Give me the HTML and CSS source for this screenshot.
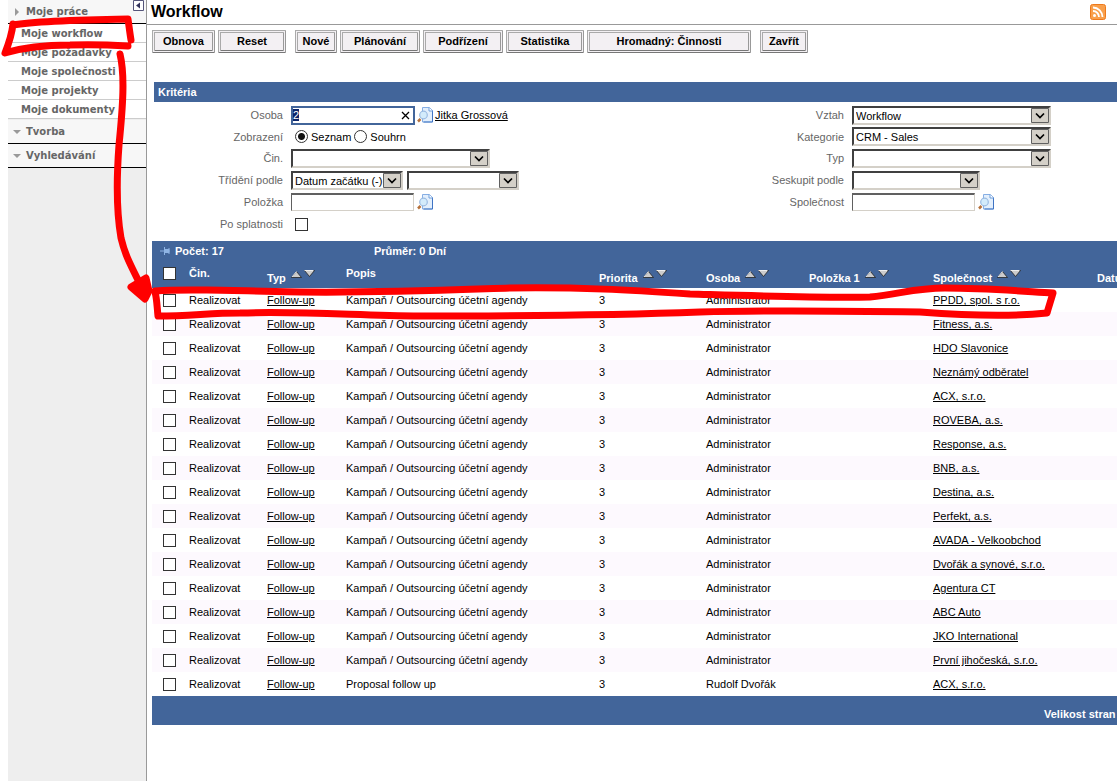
FILE: index.html
```html
<!DOCTYPE html>
<html lang="cs">
<head>
<meta charset="utf-8">
<title>Workflow</title>
<link rel="stylesheet" href="styles.css">
</head>
<body>
<svg class="defs" aria-hidden="true">
  <symbol id="lookup" viewBox="0 0 16 16">
    <path d="M5.500 .5h7l3 3v11.500h-10z" fill="#e3effc" stroke="#86aee4"/>
    <path d="M15.500 3.500v11.500h-9" fill="none" stroke="#3f74c4"/>
    <path d="M12 .5v3.500h3.500" fill="#fff" stroke="#6f9fdc"/>
    <path d="M3.500 12l-2.500 2.500" stroke="#b5703a" stroke-width="2.500"/>
    <circle cx="6.500" cy="8" r="3.800" fill="#d3ebfb" stroke="#9bbbe2" stroke-width="1.200"/>
  </symbol>
  <symbol id="arrow" viewBox="0 0 18 15">
    <path d="M.5 .5h17v14H.5z" fill="#d4d0c8" stroke="#606060"/>
    <path d="M5 5.500l4 4 4-4" fill="none" stroke="#000" stroke-width="1.700"/>
  </symbol>
  <symbol id="sort" viewBox="0 0 24 8">
    <path d="M.5 7.500h10L5.500 1.500z" fill="#ccc" stroke="#222" stroke-width=".8"/>
    <path d="M13.500 .5h10l-5 6z" fill="#ccc" stroke="#222" stroke-width=".8"/>
    <path d="M1 7L5.500 1.500M13.500 .5h9" stroke="#eee" fill="none"/>
  </symbol>
</svg>
<div class="app">
  <nav class="side">
    <button class="collapse" aria-label="Skrýt menu"><svg viewBox="0 0 11 11"><path d="M.5 .5h10v10H.5z" fill="#fff" stroke="#55557a"/><path d="M7 2.500v6L3 5.500z" fill="#33335c"/></svg></button>
    <button class="group"><svg viewBox="0 0 8 8"><path d="M2 0l4 4-4 4z"/></svg>Moje práce</button>
    <ul class="items">
      <li><a href="#">Moje workflow</a></li>
      <li><a href="#">Moje požadavky</a></li>
      <li><a href="#">Moje společnosti</a></li>
      <li><a href="#">Moje projekty</a></li>
      <li><a href="#">Moje dokumenty</a></li>
    </ul>
    <button class="group"><svg viewBox="0 0 8 8"><path d="M0 2h8L4 6z"/></svg>Tvorba</button>
    <button class="group"><svg viewBox="0 0 8 8"><path d="M0 2h8L4 6z"/></svg>Vyhledávání</button>
  </nav>
  <main class="main">
    <header class="head">
      <h1>Workflow</h1>
      <a href="#" aria-label="RSS"><svg class="rss" viewBox="0 0 16 16"><rect x=".5" y=".5" width="15" height="15" rx="2" fill="#f9a04c" stroke="#ee7a1c"/><circle cx="4.500" cy="11.500" r="1.500" fill="#fff"/><path d="M3 7a6 6 0 0 1 6 6M3 3.500A9.500 9.500 0 0 1 12.500 13" fill="none" stroke="#fff" stroke-width="1.800"/></svg></a>
    </header>
    <div class="toolbar">
      <button class="w-s">Obnova</button><button class="w-m">Reset</button>
      <button class="w-xs gap">Nové</button><button class="w-l">Plánování</button><button class="w-l">Podřízení</button><button class="w-stat">Statistika</button><button class="w-xl">Hromadný: Činnosti</button>
      <button class="w-xs gap">Zavřít</button>
    </div>
    <section class="criteria">
      <h2>Kritéria</h2>
      <form class="form">
        <div class="col">
          <label for="osoba">Osoba</label>
          <div class="field"><span class="clearable"><input class="text active" id="osoba" value="2"><button type="button" aria-label="Vymazat"><svg viewBox="0 0 9 9"><path d="M1 1l7 7M8 1L1 8" stroke="#000" stroke-width="1.300"/></svg></button></span><svg class="look"><use href="#lookup"/></svg><a href="#">Jitka Grossová</a></div>
          <span class="lab">Zobrazení</span>
          <div class="field radios"><input type="radio" name="view" id="seznam" checked><label for="seznam">Seznam</label><input type="radio" name="view" id="souhrn"><label for="souhrn">Souhrn</label></div>
          <label for="cin">Čin.</label>
          <div class="field"><span class="sel s-l"><select id="cin"><option></option></select><svg><use href="#arrow"/></svg></span></div>
          <label for="trideni">Třídění podle</label>
          <div class="field pair"><span class="sel s-s"><select id="trideni"><option>Datum začátku (-)</option></select><svg><use href="#arrow"/></svg></span><span class="sel s-s"><select aria-label="Třídění podle 2"><option></option></select><svg><use href="#arrow"/></svg></span></div>
          <label for="polozka">Položka</label>
          <div class="field"><input class="text" id="polozka"><svg class="look"><use href="#lookup"/></svg></div>
          <label for="splat">Po splatnosti</label>
          <div class="field radios"><input type="checkbox" id="splat"></div>
        </div>
        <div class="col">
          <label for="vztah">Vztah</label>
          <div class="field"><span class="sel s-l"><select id="vztah"><option>Workflow</option></select><svg><use href="#arrow"/></svg></span></div>
          <label for="kat">Kategorie</label>
          <div class="field"><span class="sel s-l"><select id="kat"><option>CRM - Sales</option></select><svg><use href="#arrow"/></svg></span></div>
          <label for="typ">Typ</label>
          <div class="field"><span class="sel s-l"><select id="typ"><option></option></select><svg><use href="#arrow"/></svg></span></div>
          <label for="sesk">Seskupit podle</label>
          <div class="field"><span class="sel s-m"><select id="sesk"><option></option></select><svg><use href="#arrow"/></svg></span></div>
          <label for="spol">Společnost</label>
          <div class="field"><input class="text" id="spol"><svg class="look"><use href="#lookup"/></svg></div>
        </div>
      </form>
    </section>
    <div class="grid">
      <div class="summary">
        <svg viewBox="0 0 10 10"><path d="M0 5h4M4.500 1v8M9 2v6M5 3.500h4v3H5z" stroke="#8fb4e4" fill="#8fb4e4"/></svg>
        <span>Počet: 17</span><span>Průměr: 0 Dní</span>
      </div>
      <table>
        <colgroup><col class="c1"><col class="c2"><col class="c3"><col class="c4"><col class="c5"><col class="c6"><col class="c7"><col class="c8"><col></colgroup>
        <thead><tr>
          <th><input type="checkbox" aria-label="Vybrat vše"></th><th>Čin.</th>
          <th class="s">Typ <svg><use href="#sort"/></svg></th><th>Popis</th>
          <th class="s">Priorita <svg><use href="#sort"/></svg></th><th class="s">Osoba <svg><use href="#sort"/></svg></th>
          <th class="s">Položka 1 <svg><use href="#sort"/></svg></th><th class="s">Společnost <svg><use href="#sort"/></svg></th><th class="s">Datum</th>
        </tr></thead>
        <tbody id="rows"></tbody>
      </table>
      <div class="foot">Velikost stran</div>
    </div>
  </main>
</div>
<svg class="marks" viewBox="0 0 1117 781" aria-hidden="true">
  <path d="M13 24C12 33 9 43 5 53C25 47 50 45 70 45C95 44 112 45 128 46M13 25C30 22 70 20 128 19C129 26 130 34 131 40"/>
  <path d="M120 54C125 75 123 105 119 145C116 185 117 215 121 238C125 255 131 266 139 282"/>
  <path class="tip" d="M131 287L146 278L149 291L145 299Z"/>
  <path d="M155 291C180 289 220 290 300 292C380 293 450 290 510 288C580 287 630 290 690 294C760 296 820 298 870 297C900 294 915 288 945 288C985 288 1020 291 1053 293C1051 300 1049 306 1047 313C1010 317 960 315 920 312C850 311 770 310 700 312C620 315 520 316 420 316C350 315 300 311 240 313C210 313 190 316 158 316C157 307 157 299 155 292"/>
</svg>
<script src="script.js"></script>
</body>
</html>
```
FILE: styles.css
```css
* { box-sizing: border-box; }
body {
  margin: 0;
  font: 11px/16px "Liberation Sans", Arial, sans-serif;
  color: #000;
  background: #fff;
  overflow: hidden;
}
a { color: inherit; }
button, input, select { font: inherit; color: inherit; margin: 0; }
.defs { position: absolute; width: 0; height: 0; }
.app { display: flex; min-height: 100vh; padding-left: 8px; }

.side {
  position: relative;
  flex: 0 0 139px;
  background: #eee;
  border-right: 1px solid #999;
  font: bold 10px/20px "DejaVu Sans", Verdana, sans-serif;
  color: #666;
}
.collapse {
  position: absolute;
  top: 0;
  right: 2px;
  width: 11px;
  height: 11px;
  padding: 0;
  border: 0;
  background: none;
}
.collapse svg { display: block; }
.group {
  display: flex;
  align-items: center;
  gap: 5px;
  width: 100%;
  height: 24px;
  padding: 1px 5px 0;
  border: 0;
  border-bottom: 1px solid #000;
  background: #f7f7f7;
}
.group svg { width: 8px; height: 8px; fill: #999; }
.items { list-style: none; margin: 0; padding: 0 0 1px; }
.items li { height: 19px; padding-left: 13px; background: #fff; border-bottom: 1px solid #ccc; }
.items a { text-decoration: none; }

.main { flex: 1; min-width: 0; overflow: hidden; }
.head {
  display: flex;
  align-items: center;
  justify-content: space-between;
  height: 25px;
  padding: 0 11px 0 4px;
  border-bottom: 1px solid #999;
}
.head h1 { margin: 0; font-size: 16px; }
.rss { display: block; width: 16px; height: 16px; }

.toolbar { display: flex; gap: 3px; padding: 5px; white-space: nowrap; }
.toolbar button {
  height: 23px;
  padding: 0 0 2px;
  border: 3px double;
  border-color: #aaa #999 #777 #aaa;
  background: #f3f0f3;
  font-weight: bold;
}
.toolbar .gap { margin-left: 6px; }
.w-xs { width: 48px; }
.w-xs:nth-child(3) { width: 42px; }
.w-s { width: 63px; }
.w-m { width: 68px; }
.w-l { width: 80px; }
.w-stat { width: 78px; }
.w-xl { width: 164px; }

.criteria { padding: 24px 0 0 7px; }
.criteria h2 {
  margin: 0;
  height: 20px;
  padding-left: 4px;
  font-size: 11px;
  line-height: 20px;
  color: #fff;
  background: #42659a;
}
.form { display: grid; grid-template-columns: 561px 1fr; padding-top: 2px; }
.col {
  display: grid;
  grid-template-columns: 129px 1fr;
  grid-template-rows: 22px 21px;
  grid-auto-rows: 22px;
  align-items: center;
  align-content: start;
  column-gap: 8px;
}
.col > label, .lab { text-align: right; color: #666; }
.field { display: flex; align-items: center; gap: 2px; }
.pair { gap: 4px; }
.text {
  width: 123px;
  height: 18px;
  padding: 0 1px;
  border: 1px solid #d4d0c8;
  border-top: 2px solid #606060;
  border-left-color: #606060;
  border-radius: 0;
  background: #fff;
  outline: 0;
}
.text.active { width: 124px; height: 19px; padding: 0; border: 2px solid #42659a; }
.text::selection { background: #0a246a; color: #fff; }
.look { width: 16px; height: 16px; }
.text + .look { margin-left: 1px; }
.clearable { position: relative; display: flex; }
.clearable button {
  position: absolute;
  top: 5px;
  right: 5px;
  width: 9px;
  height: 9px;
  padding: 0;
  border: 0;
  background: none;
}
.clearable svg { display: block; }
.sel { position: relative; display: flex; }
.sel select {
  appearance: none;
  width: 100%;
  height: 19px;
  padding: 0 18px 0 2px;
  border: 2px solid #d4d0c8;
  border-top-color: #404040;
  border-left-color: #404040;
  border-radius: 0;
  background: #fff;
}
.sel svg {
  position: absolute;
  top: 2px;
  right: 2px;
  width: 18px;
  height: 15px;
  pointer-events: none;
}
.s-l { width: 199px; }
.s-m { width: 128px; }
.s-s { width: 112px; }
.radios { padding-left: 4px; gap: 3px; }
input[type="radio"], input[type="checkbox"] {
  appearance: none;
  display: block;
  width: 13px;
  height: 13px;
  border: 1px solid #333;
  background: #fff;
}
input[type="radio"] { border-radius: 50%; }
input[type="radio"]:checked { background: radial-gradient(circle, #111 3px, #fff 4px); }

.grid { margin: 6px 0 0 5px; }
.summary {
  display: grid;
  grid-template-columns: 15px 199px 1fr;
  align-items: center;
  height: 21px;
  padding: 0 0 2px 8px;
  font-weight: bold;
  color: #fff;
  background: #42659a;
}
.summary svg { width: 10px; height: 10px; }
table { width: calc(100% + 60px); table-layout: fixed; border-collapse: collapse; white-space: nowrap; }
.c1 { width: 37px; }
.c2 { width: 78px; }
.c3 { width: 79px; }
.c4 { width: 253px; }
.c5 { width: 107px; }
.c6 { width: 103px; }
.c7 { width: 124px; }
.c8 { width: 164px; }
th, td { height: 24px; padding: 0; text-align: left; }
th { height: 26px; color: #fff; background: #42659a; vertical-align: top; padding-top: 3px; }
th.s { padding-top: 8px; }
th svg { width: 24px; height: 8px; vertical-align: 4px; margin-left: 2px; }
th input[type="checkbox"] { margin-top: 2px; }
td:first-child, th:first-child { padding-left: 11px; }
tbody tr:nth-child(even) { background: #fdf9fe; }
.foot {
  width: calc(100% + 15px);
  height: 29px;
  padding: 10px 0 0 892px;
  font-weight: bold;
  white-space: nowrap;
  color: #fff;
  background: #42659a;
}

.marks {
  position: absolute;
  top: 0;
  left: 0;
  width: 1117px;
  height: 781px;
  fill: none;
  stroke: #f00;
  stroke-width: 7px;
  stroke-linecap: round;
  stroke-linejoin: round;
  pointer-events: none;
}
.marks .tip { fill: #f00; }
```
FILE: script.js
```javascript
const companies = ["PPDD, spol. s r.o.", "Fitness, a.s.", "HDO Slavonice", "Neznámý odběratel", "ACX, s.r.o.",
  "ROVEBA, a.s.", "Response, a.s.", "BNB, a.s.", "Destina, a.s.", "Perfekt, a.s.", "AVADA - Velkoobchod",
  "Dvořák a synové, s.r.o.", "Agentura CT", "ABC Auto", "JKO International", "První jihočeská, s.r.o.", "ACX, s.r.o."];
document.getElementById("rows").innerHTML = companies.map((company, i) => {
  const last = i === companies.length - 1;
  const text = last ? "Proposal follow up" : "Kampaň / Outsourcing účetní agendy";
  const person = last ? "Rudolf Dvořák" : "Administrator";
  return `<tr><td><input type="checkbox" aria-label="Vybrat ${company}"></td><td>Realizovat</td><td><a href="#">Follow-up</a></td>` +
    `<td>${text}</td><td>3</td><td>${person}</td><td></td><td><a href="#">${company}</a></td><td></td></tr>`;
}).join("");
const person = document.getElementById("osoba");
person.focus();
person.select();
```
